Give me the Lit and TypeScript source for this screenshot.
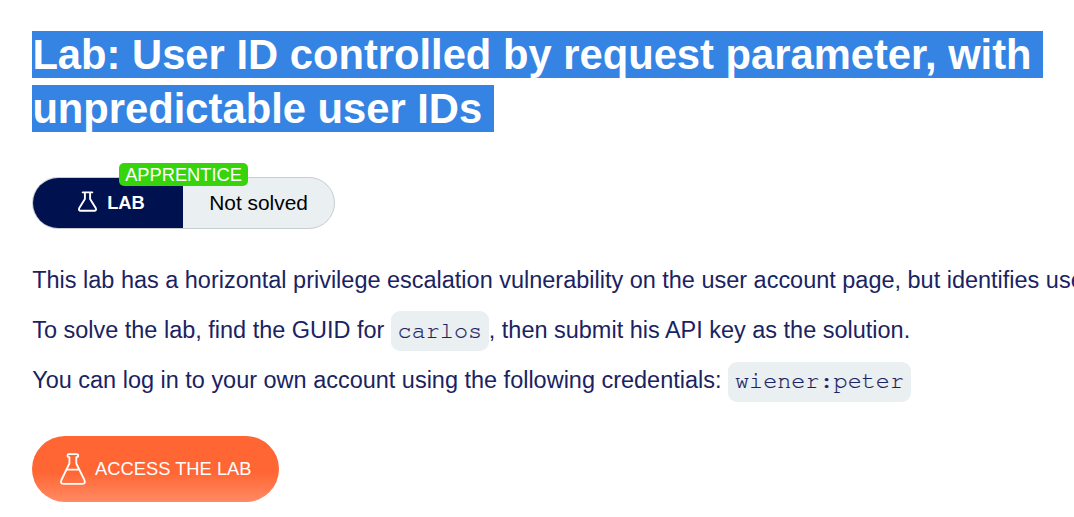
import { LitElement, html, css } from "lit";
import { customElement } from "lit/decorators.js";

@customElement("app-root")
export class AppRoot extends LitElement {
  static styles = css`
    :host {
      display: block;
      box-sizing: border-box;
      width: 100%;
      height: 517px;
      overflow: hidden;
      padding: 28px 0 0 32px;
      background: #fff;
      color: #1a2362;
      font-family: "Liberation Sans", Arial, sans-serif;
      font-size: 23.48px;
    }
    h1 {
      margin: 0;
      font-size: 41.72px;
      line-height: 54px;
      font-weight: 700;
      color: #fff;
      white-space: pre;
    }
    .selected {
      padding-left: 0.4px;
      background: #3584e4;
    }
    .status {
      position: relative;
      display: flex;
      box-sizing: border-box;
      width: 303px;
      height: 52px;
      margin-top: 41px;
      border: 1px solid #c8cdd0;
      border-radius: 26px;
      background: #eaeff2;
    }
    .kind {
      display: flex;
      align-items: center;
      box-sizing: border-box;
      width: 150px;
      padding-left: 45px;
      gap: 10.2px;
      border-radius: 25px 0 0 25px;
      background: #00114f;
      color: #fff;
      font-size: 18.3px;
      font-weight: 700;
    }
    .kind svg {
      margin-top: -4px;
    }
    .state {
      display: flex;
      align-items: center;
      padding-left: 26.2px;
      color: #000;
      font-size: 20.9px;
    }
    .level {
      position: absolute;
      left: 86px;
      top: -15px;
      box-sizing: border-box;
      width: 129px;
      height: 23px;
      border-radius: 5px;
      background: #37d40c;
      color: #fff;
      font-size: 18.26px;
      line-height: 24px;
      text-align: center;
    }
    .copy {
      margin-top: 26px;
      padding-left: 0.2px;
    }
    p {
      margin: 0;
      height: 50px;
      line-height: 50px;
      white-space: nowrap;
    }
    code {
      padding: 8px 6.7px;
      border-radius: 9px;
      background: #eaeff2;
      font-family: "Courier 10 Pitch", "Nimbus Mono PS", "FreeMono", "Courier Prime", "Liberation Mono", monospace;
      font-size: 23.48px;
      -webkit-text-stroke: 0.2px #1a2362;
    }
    .credentials {
      padding: 7px 7px 9px;
    }
    .access {
      display: flex;
      align-items: center;
      box-sizing: border-box;
      width: 247px;
      height: 66px;
      margin-top: 31px;
      padding-left: 28px;
      gap: 9px;
      border-radius: 33px;
      background: linear-gradient(#ff6633 0 55%, #ff8a64 100%);
      color: #fff;
      font-size: 18.33px;
      white-space: nowrap;
    }
    .access svg {
      margin-top: -1px;
    }
    svg {
      display: block;
      flex: none;
      fill: none;
      stroke: #fff;
      stroke-linecap: round;
      stroke-linejoin: round;
    }
  `;

  render() {
    return html`
      <h1><span class="selected">Lab: User ID controlled by request parameter, with </span>
<span class="selected">unpredictable user IDs </span></h1>
      <div class="status">
        <div class="kind">
          <svg width="19" height="21" viewBox="0 0 19 21" stroke-width="1.9">
            <path d="M4.7 1.4H14.3M6.9 1.5V8L1.3 17Q.2 19.8 2.8 19.8H16.2Q18.8 19.8 17.7 17L12.1 8V1.5" />
          </svg>
          <span>LAB</span>
        </div>
        <div class="state">Not solved</div>
        <div class="level">APPRENTICE</div>
      </div>
      <div class="copy">
        <p>This lab has a horizontal privilege escalation vulnerability on the user account page, but identifies users</p>
        <p>To solve the lab, find the GUID for <code>carlos</code>, then submit his API key as the solution.</p>
        <p>You can log in to your own account using the following credentials: <code class="credentials">wiener:peter</code></p>
      </div>
      <div class="access">
        <svg width="26" height="32" viewBox="0 0 26 32" stroke-width="1.8">
          <path d="M8.7 1.2H17Q18.2 1.2 18.2 2.4V3.1Q18.2 4.2 17 4.2H16.3V10.5L24.4 27Q25.8 30.8 22.6 30.8H3.2Q0 30.8 1.4 27L9.4 10.5V4.2H8.7Q7.5 4.2 7.5 3.1V2.4Q7.5 1.2 8.7 1.2M6.8 16.6H18.9" />
        </svg>
        <span>ACCESS THE LAB</span>
      </div>
    `;
  }
}
